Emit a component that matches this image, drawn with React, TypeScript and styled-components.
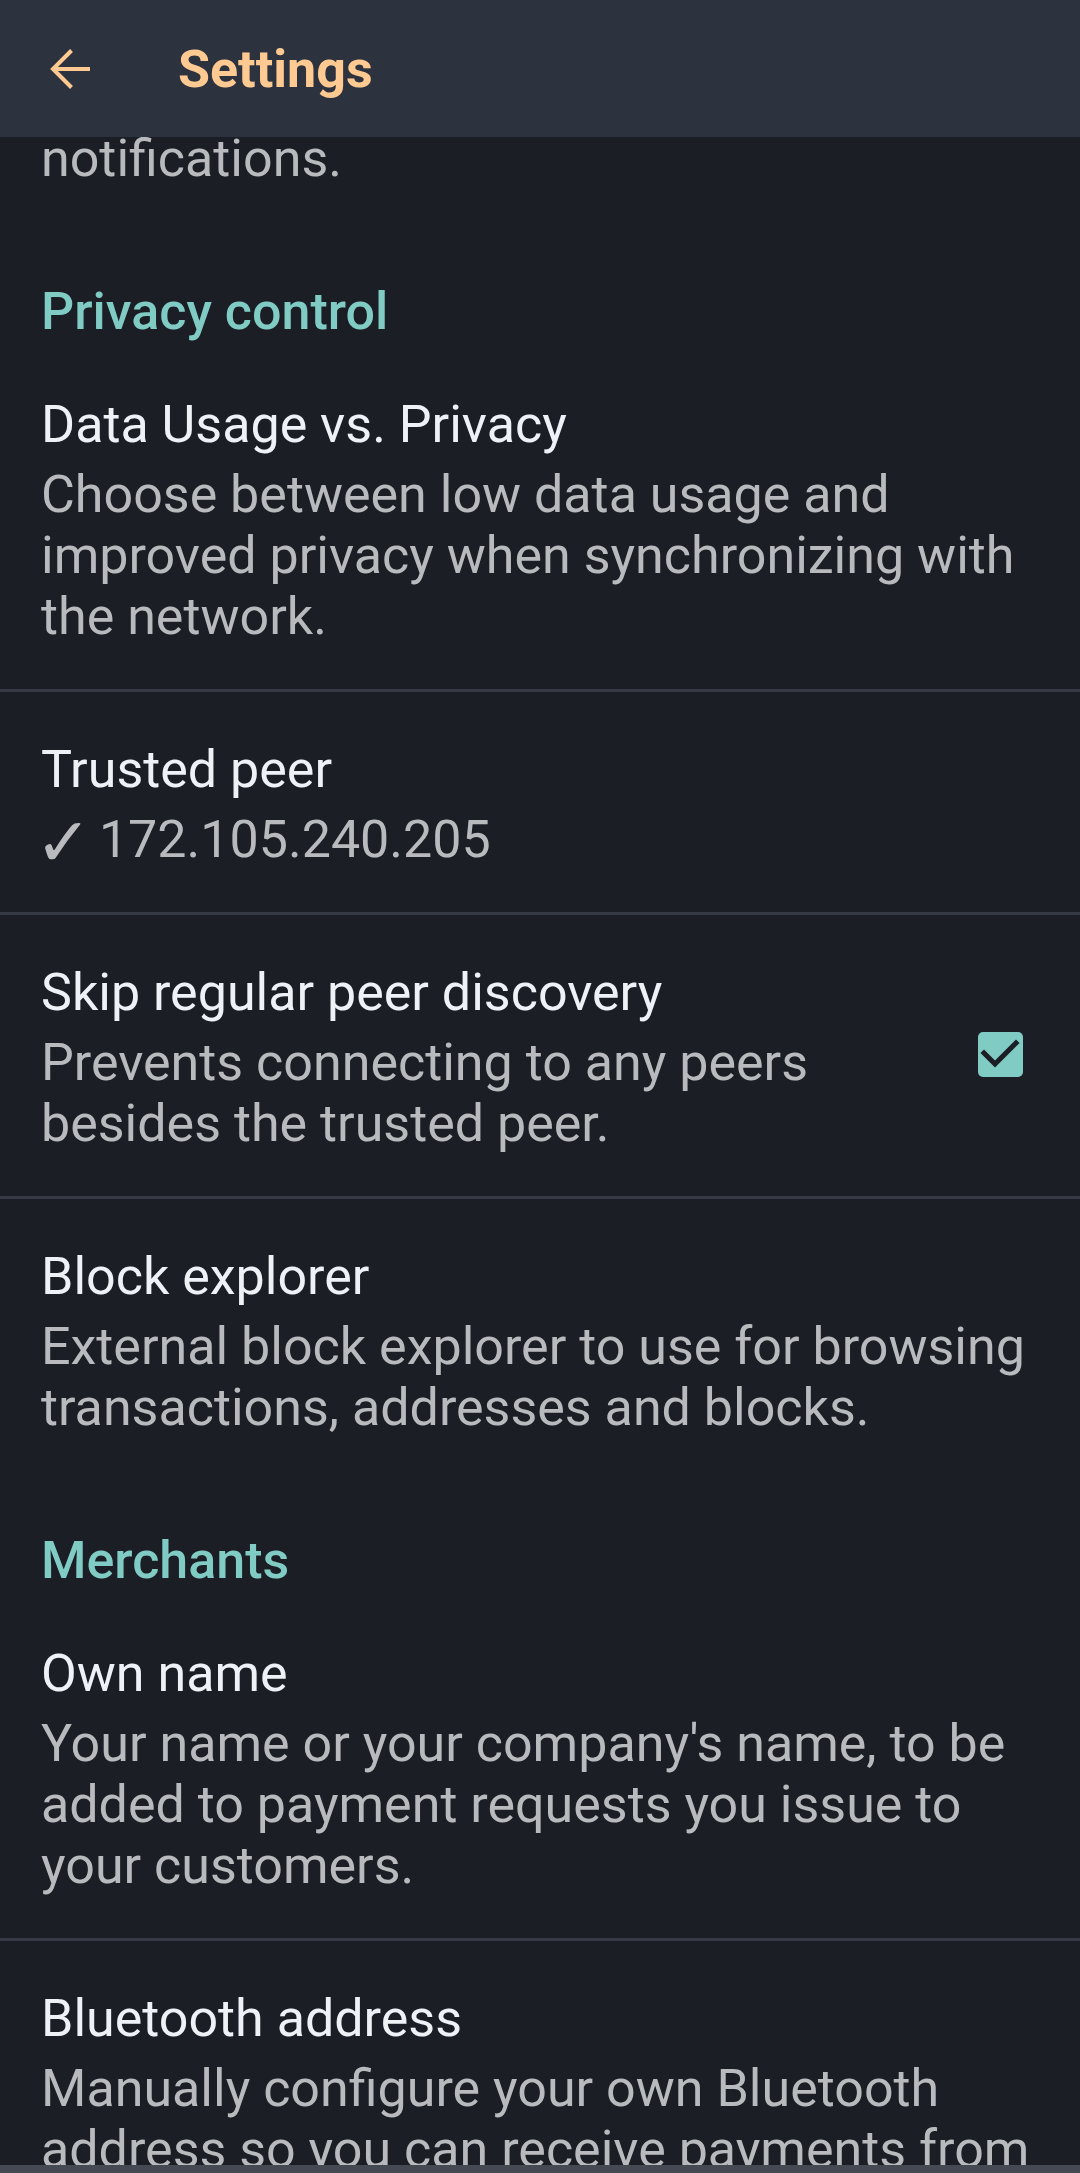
import React from "react";
import styled, { createGlobalStyle } from "styled-components";

const GlobalStyle = createGlobalStyle`
  html, body {
    margin: 0;
    padding: 0;
    background: #1b1e25;
  }
  body {
    font-family: Roboto, "Noto Sans", "DejaVu Sans", sans-serif;
    -webkit-font-smoothing: antialiased;
  }
  * { box-sizing: border-box; }
`;

const Page = styled.div`
  width: 1080px;
  height: 2173px;
  display: flex;
  flex-direction: column;
  overflow: hidden;
  background: #1b1e25;
`;

const AppBar = styled.header`
  position: relative;
  z-index: 2;
  flex-shrink: 0;
  height: 137px;
  display: flex;
  align-items: center;
  background: #2d323f;
`;

const BackButton = styled.button`
  width: 40px;
  height: 40px;
  margin-left: 50px;
  padding: 0;
  border: none;
  background: transparent;
  display: flex;
  align-items: center;
  justify-content: center;
`;

const Title = styled.h1`
  margin: 0 0 0 88px;
  padding-top: 2px;
  font-size: 52px;
  line-height: 61px;
  font-weight: 700;
  color: #ffca92;
`;

const Viewport = styled.main`
  flex: 1;
  overflow: hidden;
`;

const List = styled.div`
  margin-top: -9.5px;
  display: flex;
  flex-direction: column;
`;

const Category = styled.div`
  padding: 50px 41px 5px;
  font-size: 52px;
  line-height: 61px;
  font-weight: 500;
  color: #80cbc4;
`;

const Preference = styled.div<{ $divider?: boolean; $partial?: boolean }>`
  display: flex;
  align-items: center;
  padding: ${(p) => (p.$partial ? "0" : "47px")} 24px 42px 41px;
  border-bottom: ${(p) => (p.$divider ? "3px solid #363a44" : "none")};
`;

const TextBlock = styled.div`
  flex: 1;
  min-width: 0;
  display: flex;
  flex-direction: column;
`;

const PrefTitle = styled.div`
  font-size: 52px;
  line-height: 61px;
  font-weight: 400;
  color: #eef1f6;
`;

const PrefSummary = styled.div<{ $noTitle?: boolean }>`
  margin-top: ${(p) => (p.$noTitle ? "0" : "9px")};
  font-size: 52px;
  line-height: 61px;
  font-weight: 400;
  color: #b8babe;
`;

const CheckMark = styled.span`
  display: inline-block;
  font-family: "DejaVu Sans", sans-serif;
  font-size: 68px;
  line-height: 0;
  vertical-align: -9px;
  margin-left: -6px;
  margin-right: -6px;
`;

const CheckboxBox = styled.div`
  flex-shrink: 0;
  width: 45px;
  height: 45px;
  margin: -6px 33px 0 40px;
  border-radius: 5px;
  background: #80cbc4;
  display: flex;
  align-items: center;
  justify-content: center;
`;

const NavBar = styled.div`
  flex-shrink: 0;
  height: 8px;
  background: #444952;
`;

const BackArrow = () => (
  <svg width="40" height="40" viewBox="0 0 40 40" fill="none">
    <path
      d="M40 20 H3 M21.5 1.5 L3 20 L21.5 38.5"
      stroke="#ffca92"
      strokeWidth="4"
      strokeLinejoin="miter"
    />
  </svg>
);

const Check = () => (
  <svg width="45" height="45" viewBox="0 0 45 45" fill="none">
    <polyline
      points="6,21 17,32 38,11"
      stroke="#1b1e25"
      strokeWidth="5"
      strokeLinecap="square"
      strokeLinejoin="miter"
    />
  </svg>
);

type Pref = {
  title?: string;
  summary: React.ReactNode;
  divider?: boolean;
  checked?: boolean;
};

const PreferenceItem = ({ title, summary, divider, checked }: Pref) => (
  <Preference $divider={divider} $partial={!title}>
    <TextBlock>
      {title && <PrefTitle>{title}</PrefTitle>}
      <PrefSummary $noTitle={!title}>{summary}</PrefSummary>
    </TextBlock>
    {checked && (
      <CheckboxBox>
        <Check />
      </CheckboxBox>
    )}
  </Preference>
);

export default function App() {
  return (
    <>
      <GlobalStyle />
      <Page>
        <AppBar>
          <BackButton aria-label="Back">
            <BackArrow />
          </BackButton>
          <Title>Settings</Title>
        </AppBar>
        <Viewport>
          <List>
            <PreferenceItem summary="notifications." />
            <Category>Privacy control</Category>
            <PreferenceItem
              title="Data Usage vs. Privacy"
              summary="Choose between low data usage and improved privacy when synchronizing with the network."
              divider
            />
            <PreferenceItem
              title="Trusted peer"
              summary={
                <>
                  <CheckMark>✓</CheckMark> 172.105.240.205
                </>
              }
              divider
            />
            <PreferenceItem
              title="Skip regular peer discovery"
              summary="Prevents connecting to any peers besides the trusted peer."
              divider
              checked
            />
            <PreferenceItem
              title="Block explorer"
              summary="External block explorer to use for browsing transactions, addresses and blocks."
            />
            <Category>Merchants</Category>
            <PreferenceItem
              title="Own name"
              summary="Your name or your company's name, to be added to payment requests you issue to your customers."
              divider
            />
            <PreferenceItem
              title="Bluetooth address"
              summary="Manually configure your own Bluetooth address so you can receive payments from devices that cannot discover it."
              divider
            />
          </List>
        </Viewport>
        <NavBar />
      </Page>
    </>
  );
}
